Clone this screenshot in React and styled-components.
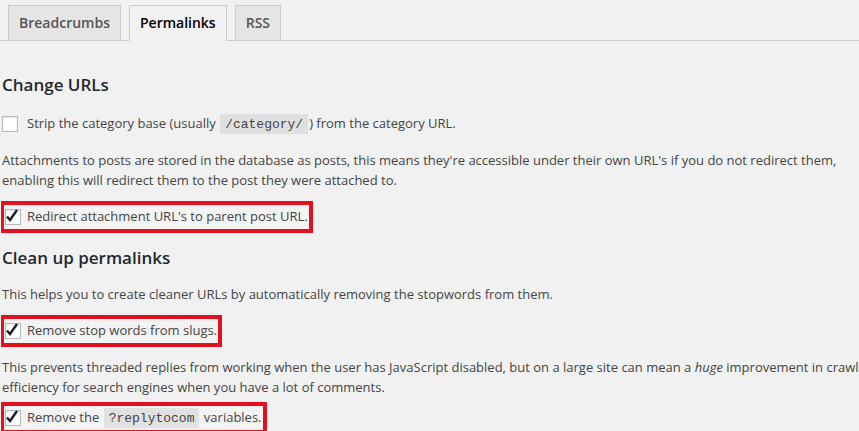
import React from 'react';
import styled, { createGlobalStyle } from 'styled-components';

const GlobalStyle = createGlobalStyle`
  html, body {
    margin: 0;
    padding: 0;
    background: #f1f1f1;
    overflow: hidden;
  }
  body {
    font-family: "Open Sans", "Liberation Sans", sans-serif;
    font-size: 13px;
    line-height: 1.5;
    color: #444;
  }
`;

const Page = styled.div`
  width: 880px;
`;

const TabBar = styled.nav`
  display: flex;
  gap: 8px;
  padding: 5px 0 0 8px;
  border-bottom: 1px solid #ccc;
`;

const Tab = styled.a`
  display: block;
  padding: 5px 10px;
  margin-bottom: -1px;
  font-size: 14px;
  font-weight: 600;
  line-height: 24px;
  color: ${(p) => (p.$active ? '#000' : '#555')};
  background: ${(p) => (p.$active ? '#f1f1f1' : '#e5e5e5')};
  border: 1px solid #ccc;
  border-bottom-color: ${(p) => (p.$active ? '#f1f1f1' : '#ccc')};
  text-decoration: none;
`;

const Content = styled.div`
  padding: 0 0 0 2px;
`;

const Heading = styled.h2`
  margin: ${(p) => p.$top}px 0 0;
  font-size: 17px;
  font-weight: 600;
  line-height: 22px;
  color: #23282d;
`;

const Para = styled.p`
  margin: ${(p) => p.$top}px 0 0;
  line-height: 20px;
`;

const Row = styled.label`
  display: flex;
  align-items: center;
  gap: ${(p) => p.$gap || 9}px;
  height: 20px;
  margin-top: ${(p) => p.$top || 0}px;
`;

const Highlight = styled.div`
  display: inline-block;
  margin: ${(p) => p.$top}px 0 0 -1px;
  padding: 2px 1px 2px 1px;
  border: 4px solid #e3101e;
  border-left-width: 3px;
  background: #f3f3f3;
`;

const Box = styled.span`
  position: relative;
  flex: none;
  width: 16px;
  height: 16px;
  box-sizing: border-box;
  border: 1px solid #b4b9be;
  background: #fff;
  box-shadow: inset 0 1px 2px rgba(0, 0, 0, 0.1);
`;

const Code = styled.code`
  font-family: "Liberation Mono", "DejaVu Sans Mono", monospace;
  font-size: 13px;
  padding: 3px 5px 2px;
  margin: 0 1px;
  background: rgba(0, 0, 0, 0.07);
`;

const Check = () => (
  <svg width="16" height="16" viewBox="0 0 16 16" style={{ position: 'absolute', left: -2, top: -3 }}>
    <path d="M3 9.5 L6 13 L13 3" fill="none" stroke="#1e1e1e" strokeWidth="2.4" strokeLinejoin="miter" />
  </svg>
);

const Checkbox = ({ checked }) => <Box>{checked && <Check />}</Box>;

const App = () => (
  <Page>
    <GlobalStyle />
    <TabBar>
      <Tab>Breadcrumbs</Tab>
      <Tab $active>Permalinks</Tab>
      <Tab>RSS</Tab>
    </TabBar>
    <Content>
      <Heading $top={33}>Change URLs</Heading>
      <Row $top={18}>
        <Checkbox />
        <span>
          Strip the category base (usually <Code>/category/</Code>) from the category URL.
        </span>
      </Row>
      <Para $top={16}>
        Attachments to posts are stored in the database as posts, this means they're accessible under their own URL's if you
        do not redirect them, enabling this will redirect them to the post they were attached to.
      </Para>
      <Highlight $top={11}>
        <Row $gap={6}>
          <Checkbox checked />
          <span>Redirect attachment URL's to parent post URL.</span>
        </Row>
      </Highlight>
      <Heading $top={14}>Clean up permalinks</Heading>
      <Para $top={15}>This helps you to create cleaner URLs by automatically removing the stopwords from them.</Para>
      <Highlight $top={11}>
        <Row $gap={6}>
          <Checkbox checked />
          <span>Remove stop words from slugs.</span>
        </Row>
      </Highlight>
      <Para $top={10}>
        This prevents threaded replies from working when the user has JavaScript disabled, but on a large site can mean a{' '}
        <em>huge</em> improvement in crawl efficiency for search engines when you have a lot of comments.
      </Para>
      <Highlight $top={5}>
        <Row $gap={6}>
          <Checkbox checked />
          <span>
            Remove the <Code>?replytocom</Code> variables.
          </span>
        </Row>
      </Highlight>
    </Content>
  </Page>
);

export default App;
